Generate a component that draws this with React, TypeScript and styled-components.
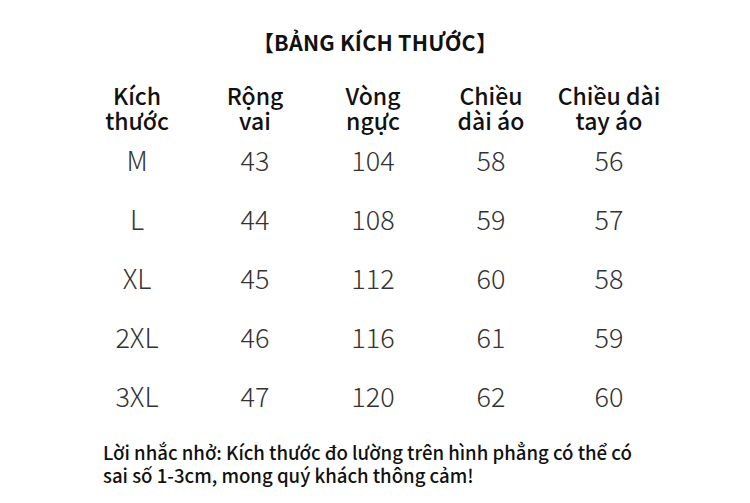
import React from "react";
import styled, { createGlobalStyle } from "styled-components";

const Global = createGlobalStyle`
  html, body { margin: 0; padding: 0; background: #ffffff; }
  body { font-family: "Noto Sans CJK SC", "Noto Sans", sans-serif; }
`;

const Page = styled.div`
  width: 750px;
  height: 503px;
  box-sizing: border-box;
  padding-top: 24px;
  display: flex;
  flex-direction: column;
  align-items: center;
  color: #111;
`;

const Title = styled.h1`
  margin: 0;
  font-size: 21.5px;
  font-weight: 700;
  line-height: 36px;
  letter-spacing: 0.2px;
`;

const Table = styled.div`
  margin-top: 23px;
  margin-right: 4px;
  display: grid;
  grid-template-columns: repeat(5, 118px);
`;

const HeadCell = styled.div`
  text-align: center;
  font-size: 23px;
  font-weight: 500;
  line-height: 25px;
  color: #111;
  margin-bottom: -3px;
  white-space: nowrap;
`;

const Cell = styled.div`
  height: 59px;
  display: flex;
  align-items: center;
  justify-content: center;
  font-size: 27px;
  font-weight: 300;
  line-height: 34px;
  color: #333;
`;

const Note = styled.p`
  margin: 15px 0 0 0;
  align-self: flex-start;
  padding-left: 103px;
  width: 600px;
  font-size: 18.6px;
  font-weight: 500;
  line-height: 23px;
  color: #111;
  white-space: nowrap;
`;

const headers = [
  ["Kích", "thước"],
  ["Rộng", "vai"],
  ["Vòng", "ngực"],
  ["Chiều", "dài áo"],
  ["Chiều dài", "tay áo"],
];

const rows = [
  ["M", "43", "104", "58", "56"],
  ["L", "44", "108", "59", "57"],
  ["XL", "45", "112", "60", "58"],
  ["2XL", "46", "116", "61", "59"],
  ["3XL", "47", "120", "62", "60"],
];

export default function App() {
  return (
    <>
      <Global />
      <Page>
        <Title>【BẢNG KÍCH THƯỚC】</Title>
        <Table>
          {headers.map((h, i) => (
            <HeadCell key={i}>
              {h[0]}
              <br />
              {h[1]}
            </HeadCell>
          ))}
          {rows.map((r, ri) =>
            r.map((c, ci) => <Cell key={`${ri}-${ci}`}>{c}</Cell>)
          )}
        </Table>
        <Note>
          Lời nhắc nhở: Kích thước đo lường trên hình phẳng có thể có
          <br />
          sai số 1-3cm, mong quý khách thông cảm!
        </Note>
      </Page>
    </>
  );
}
